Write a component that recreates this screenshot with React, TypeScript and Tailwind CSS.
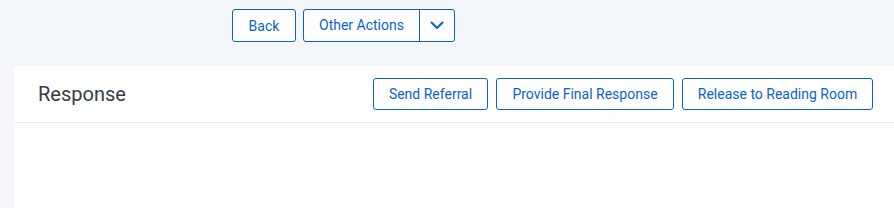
import React from "react";

const btn =
  "shrink-0 whitespace-nowrap h-[32px] px-0 border border-[#0a64c8] rounded-[3px] bg-white text-[#0a64c8] text-[14px] leading-none flex items-center justify-center";

export default function App() {
  return (
    <div
      className="w-[894px] h-[208px] overflow-hidden bg-[#f3f7f9]"
      style={{ fontFamily: "Roboto, 'Liberation Sans', sans-serif" }}
    >
      <div className="flex gap-[7px] pt-[9px] pl-[232px]">
        <button className={`${btn} h-[33px] w-[64px]`}>Back</button>
        <div className="flex shrink-0 h-[33px] border border-[#0a64c8] rounded-[3px] bg-white text-[#0a64c8]">
          <button className="w-[116px] h-full text-[14px] whitespace-nowrap flex items-center justify-center border-r border-[#0a64c8]">
            Other Actions
          </button>
          <button className="w-[34px] h-full flex items-center justify-center">
            <svg width="14" height="9" viewBox="0 0 14 9" fill="none">
              <path d="M1.5 1.5 L7 7 L12.5 1.5" stroke="#0a64c8" strokeWidth="2" strokeLinecap="round" strokeLinejoin="round" />
            </svg>
          </button>
        </div>
      </div>
      <div className="ml-[14px] mt-[24px] w-[882px] h-[200px] bg-white rounded-tl-[4px]">
        <div className="h-[57px] pl-[24px] pr-[23px] flex items-center justify-between border-b border-[#e3eef3]">
          <div className="text-[20px] text-[#363c45]">Response</div>
          <div className="flex gap-[8px] shrink-0">
            <button className={`${btn} w-[115px]`}>Send Referral</button>
            <button className={`${btn} w-[178px]`}>Provide Final Response</button>
            <button className={`${btn} w-[191px]`}>Release to Reading Room</button>
          </div>
        </div>
      </div>
    </div>
  );
}
